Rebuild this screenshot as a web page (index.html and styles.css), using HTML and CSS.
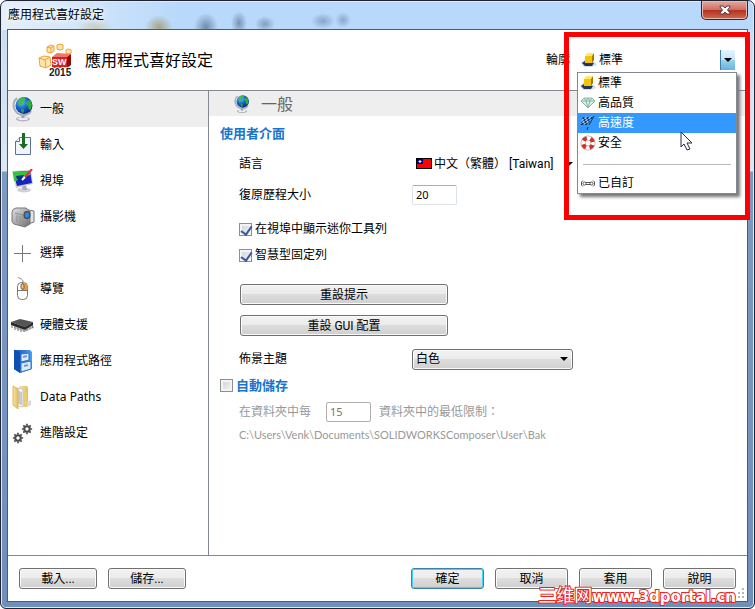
FILE: index.html
```html
<!DOCTYPE html>
<html lang="zh-Hant">
<head>
    <meta charset="UTF-8">
    <title>應用程式喜好設定</title>
    <meta name="viewport" content="width=device-width, initial-scale=1.0">
    <link rel="stylesheet" href="styles.css">
</head>
<body>
<!-- shared icons -->
<svg class="defs" width="0" height="0" aria-hidden="true">
    <defs>
        <radialGradient id="sea" cx="35%" cy="30%" r="75%">
            <stop offset="0" stop-color="#6fc4ff"/>
            <stop offset=".5" stop-color="#1563d8"/>
            <stop offset="1" stop-color="#06247e"/>
        </radialGradient>
        <linearGradient id="metal" x1="0" y1="0" x2="1" y2="1">
            <stop offset="0" stop-color="#e4e4e4"/>
            <stop offset="1" stop-color="#6e6e6e"/>
        </linearGradient>
        <linearGradient id="cabinet" x1="0" y1="0" x2="1" y2="0">
            <stop offset="0" stop-color="#0d4fb4"/>
            <stop offset="1" stop-color="#4aa0f4"/>
        </linearGradient>
        <linearGradient id="folder" x1="0" y1="0" x2="1" y2="0">
            <stop offset="0" stop-color="#f9e6a4"/>
            <stop offset="1" stop-color="#e3bd5c"/>
        </linearGradient>
    </defs>
    <symbol id="globe" viewBox="1 1 22 26">
        <ellipse cx="12" cy="24" rx="7" ry="2.500" fill="#b4b6c4"/>
        <ellipse cx="12" cy="23.500" rx="5" ry="1.500" fill="#eceef4"/>
        <path d="M12 19v4" stroke="#9a9cac" stroke-width="3"/>
        <path d="M6 3C0 8 2 19 12 20c4 0 7-1 8-4" fill="none" stroke="#a9abba" stroke-width="2"/>
        <circle cx="13" cy="10.500" r="8.500" fill="url(#sea)"/>
        <path d="M8 5c1-2 4-3 6-2l0 2-2 1 0 2-2 1-1 2-2-2z" fill="#3fbf3a"/>
        <path d="M16 6l3-1 2 4-1 5-2 1-1-4-2-2z" fill="#2fae36"/>
        <path d="M10 13l3 1 0 3-2 1-1-2z" fill="#2a9d3a"/>
    </symbol>
    <symbol id="cube" viewBox="0 0 16 16">
        <path d="M0 11l4-4 10 3 2 3-5 2H3z" fill="#d5dded"/>
        <path d="M1 11l3-2 9 2-2 3H4z" fill="#26345c"/>
        <path d="M4 4l2-3h7l-2 3z" fill="#ffe96a"/>
        <path d="M4 4h7v7H4z" fill="#f2c40c"/>
        <path d="M11 4l2-3v7l-2 3z" fill="#a87800"/>
    </symbol>
    <symbol id="gear" viewBox="-7 -7 14 14">
        <circle r="3.200" fill="none" stroke="#4a4a4a" stroke-width="2.400"/>
        <path d="M0-4v-2M0 4v2M-4 0h-2M4 0h2M-3-3l-1.300-1.300M3 3l1.300 1.300M-3 3l-1.300 1.300M3-3l1.300-1.300" stroke="#4a4a4a" stroke-width="2"/>
    </symbol>
</svg>

<div class="window">
    <div class="titlebar">
        <h1>應用程式喜好設定</h1>
        <button type="button" class="close" aria-label="關閉">
            <svg width="12" height="10" viewBox="0 0 12 10"><path d="M1 1h3l2 2 2-2h3v1L8.500 5 11 8v1H8L6 7 4 9H1V8l2.500-3L1 2z" fill="#fff" stroke="#5a3a40"/></svg>
        </button>
    </div>

    <div class="client">
        <header class="header">
            <svg class="logo" width="34" height="34" viewBox="0 0 34 34">
                <g fill="#fde6ad" stroke="#f0a437">
                    <path d="M1 15l5-2 6 1 1 8-5 3-6-2z"/>
                    <path d="M1 15l6 2 5-3M7 17l1 8" fill="none"/>
                    <path d="M9 4l4-2 3 1v5l-3 2-4-1z"/>
                    <path d="M9 4l4 1 3-2M13 5v5" fill="none"/>
                    <path d="M19 2l3-1 3 1v4l-3 1-3-1z"/>
                    <path d="M28 7l2-1 3 1v3l-3 1-2-1z"/>
                </g>
                <path d="M14 14l5-4 14 1-4 3z" fill="#f0766c"/>
                <path d="M14 14h15v11H14z" fill="#d8231c"/>
                <path d="M29 14l4-3v11l-4 3z" fill="#8c0d0a"/>
                <text class="logo-sw" x="14" y="22">SW</text>
                <text class="logo-year" x="11" y="33">2015</text>
            </svg>
            <h2>應用程式喜好設定</h2>
            <label for="profile">輪廓</label>
            <div class="profile">
                <svg width="16" height="16"><use href="#cube"/></svg>
                <select id="profile">
                    <option>標準</option>
                </select>
                <span class="drop"></span>
                <ul class="menu" role="listbox" aria-label="輪廓">
                    <li role="option">
                        <svg width="16" height="16"><use href="#cube"/></svg>標準
                    </li>
                    <li role="option">
                        <svg width="16" height="16" viewBox="0 0 16 16">
                            <path d="M4 3h8l3 3-7 7-7-7z" fill="#d6efe6" stroke="#8fb5a8"/>
                            <path d="M1 6h14M4 3l2 3 2-3 2 3 2-3M6 6l2 7 2-7" fill="none" stroke="#8fb5a8"/>
                        </svg>高品質
                    </li>
                    <li role="option" class="active" aria-selected="true">
                        <svg width="16" height="16" viewBox="0 0 16 16">
                            <path d="M3 2c3-1 5 1 9-1l-4 8c-3 1-5-1-8 1z" fill="#8cc4fa"/>
                            <path d="M3 2h2L4 4H2zM7 2h2L8 4H6zM11 2h2l-1 2h-2zM4 4h2L5 6H3zM8 4h2L9 6H7zM2 6h1L2 8H1zM5 6h2L6 8H4zM9 6h1L9 8H8zM2 8h2l-1 2H0zM6 8h2l-1 2H5z" fill="#12365e"/>
                            <path d="M14 1L9 10M8 12l-1 3" stroke="#12365e"/>
                        </svg>高速度
                    </li>
                    <li role="option">
                        <svg width="16" height="16" viewBox="0 0 16 16">
                            <circle cx="8" cy="8" r="5" fill="none" stroke="#b5b5b5" stroke-width="5"/>
                            <circle cx="8" cy="8" r="5" fill="none" stroke="#fff" stroke-width="3.500"/>
                            <circle cx="8" cy="8" r="5" fill="none" stroke="#d8302a" stroke-width="4" stroke-dasharray="4 3.850" stroke-dashoffset="-2"/>
                        </svg>安全
                    </li>
                    <li class="divider" role="separator"></li>
                    <li role="option">
                        <svg width="16" height="16" viewBox="0 0 16 16" fill="none" stroke="#555">
                            <path d="M6 7.500h5M6 9.500h5M3 5.500L1.500 7v3L3 11.500M13 5.500l1.500 1.500v3L13 11.500"/>
                            <circle cx="4.500" cy="8.500" r="1.500"/>
                            <circle cx="11.500" cy="8.500" r="1.500"/>
                        </svg>已自訂
                    </li>
                </ul>
            </div>
        </header>

        <div class="body">
            <nav class="sidebar">
                <a href="#general" class="current">
                    <svg width="24" height="26"><use href="#globe"/></svg>一般
                </a>
                <a href="#input">
                    <svg width="24" height="24" viewBox="0 0 24 24">
                        <path d="M8.500 4.500h11v17h-15v-13z" fill="#f1f4fa" stroke="#5b7297"/>
                        <path d="M4.500 8.500h4v-4" fill="#fff" stroke="#5b7297"/>
                        <path d="M11 0h3v11h3l-4.500 5L8 11h3z" fill="#1c6b24"/>
                    </svg>輸入
                </a>
                <a href="#viewport">
                    <svg width="24" height="24" viewBox="0 0 24 24">
                        <ellipse cx="13" cy="21" rx="7" ry="2.500" fill="#d0d2d8"/>
                        <path d="M11 17l4-1 1 5h-4z" fill="#a9acb5"/>
                        <path d="M1 2l19-1 2 14-17 4z" fill="#c9ccd4"/>
                        <path d="M2 3l17-1 2 12-15 3z" fill="#1824c0"/>
                        <path d="M2 3l17-1 0 4-9 3-5 3-2 0z" fill="#35c33c"/>
                        <path d="M5 7l8-1-2 3 2 2-4 1-3-2z" fill="#0c2f8c"/>
                        <path d="M21 0l-7 8" stroke="#e0332a" stroke-width="2"/>
                        <path d="M14 8l-3 3" stroke="#fff" stroke-width="2"/>
                    </svg>視埠
                </a>
                <a href="#camera">
                    <svg width="24" height="24" viewBox="0 0 24 24">
                        <path d="M17 5l6 1v11l-6 2z" fill="#dfe2ea" stroke="#777"/>
                        <path d="M1 7q0-3 4-4h10l4 3v13l-5 3-11-3q-2-1-2-3z" fill="url(#metal)" stroke="#777"/>
                        <path d="M4 8l8 2v11M6 10v7M9 11v7" fill="none" stroke="#8f8f8f"/>
                        <ellipse cx="16" cy="10" rx="3.500" ry="4" fill="#444"/>
                        <ellipse cx="16" cy="10" rx="2.300" ry="2.800" fill="#2d8be8"/>
                    </svg>攝影機
                </a>
                <a href="#selection">
                    <svg width="24" height="24" viewBox="0 0 24 24"><path d="M11.500 4v17M3 12.500h17" stroke="#777"/></svg>選擇
                </a>
                <a href="#navigation">
                    <svg width="24" height="24" viewBox="0 0 24 24">
                        <path d="M7 0c1 2 5 1 5 5" fill="none" stroke="#888"/>
                        <rect x="6.500" y="5.500" width="10" height="17" rx="4" fill="#fff" stroke="#777"/>
                        <path d="M12 6c3 0 4.500 2 4.500 4v3H12z" fill="#f79a22"/>
                        <path d="M6.500 13.500h10M11.500 5v8" stroke="#777"/>
                        <rect x="10" y="7" width="3" height="5" rx="1" fill="#fbc56f" stroke="#666"/>
                    </svg>導覽
                </a>
                <a href="#hardware">
                    <svg width="24" height="24" viewBox="0 0 24 24">
                        <path d="M3 15l11 4 9-4v-2H3z" fill="#c4c4c4"/>
                        <path d="M0 9l9-3 13 3-8 5z" fill="#555"/>
                        <path d="M0 9l14 5v3L0 12zM14 14l8-5v3l-8 5z" fill="#2a2a2a"/>
                        <path d="M1 12v3M4 13v4M7 14v4M10 15v4M13 16v3M16 15v3M19 13v3M21.500 12v3" stroke="#777"/>
                    </svg>硬體支援
                </a>
                <a href="#apppaths">
                    <svg width="24" height="24" viewBox="0 0 24 24">
                        <path d="M3 1h16l2 2v17l-12 4-6-4z" fill="url(#cabinet)"/>
                        <path d="M3 1l6 2v21l-6-4z" fill="#1250b0"/>
                        <path d="M10 5l8-1v7l-8 2zM10 14l10-2v8l-10 3z" fill="#dceafa" stroke="#2a72d0"/>
                        <path d="M12 8l4-1M13 17l4-1" stroke="#8797b0" stroke-width="2"/>
                    </svg>應用程式路徑
                </a>
                <a href="#datapaths">
                    <svg width="24" height="24" viewBox="0 0 24 24">
                        <path d="M8 1h8l1 2v17l-9 2z" fill="url(#folder)"/>
                        <path d="M5 3l7 1v18l-6-1z" fill="#f4f4f4" stroke="#c9c9c9"/>
                        <path d="M8 6v13M10 7v13" stroke="#9aa2ad"/>
                        <path d="M2 1l5 3v20l-5-4z" fill="url(#folder)" stroke="#dcb75c"/>
                        <path d="M13 8h3v14h-4z" fill="#edcb70"/>
                        <path d="M16 17l4-2v5l-4 2z" fill="#d7dade"/>
                    </svg>Data Paths
                </a>
                <a href="#advanced">
                    <svg width="24" height="24" viewBox="0 0 24 24">
                        <use href="#gear" x="1" y="11" width="12" height="12"/>
                        <use href="#gear" x="10" y="2" width="12" height="12"/>
                    </svg>進階設定
                </a>
            </nav>

            <main class="content" id="general">
                <h2 class="page-title">
                    <svg width="16" height="20"><use href="#globe"/></svg>一般
                </h2>
                <section class="group">
                    <h3>使用者介面</h3>
                    <div class="row">
                        <label for="language">語言</label>
                        <div class="language">
                            <svg width="16" height="11" viewBox="0 0 16 11">
                                <path d="M0 0h16v11H0z" fill="#000"/>
                                <path d="M1 1h14v9H1z" fill="#f00"/>
                                <path d="M1 1h6v5H1z" fill="#000090"/>
                                <path d="M4 2v3M2.500 3.500h3" stroke="#fff"/>
                            </svg>
                            <select id="language">
                                <option>中文（繁體） [Taiwan]</option>
                            </select>
                        </div>
                    </div>
                    <div class="row">
                        <label for="history">復原歷程大小</label>
                        <input type="text" id="history" value="20">
                    </div>
                    <div class="checks">
                        <label><input type="checkbox" checked>在視埠中顯示迷你工具列</label>
                        <label><input type="checkbox" checked>智慧型固定列</label>
                    </div>
                    <div class="resets">
                        <button type="button">重設提示</button>
                        <button type="button">重設 GUI 配置</button>
                    </div>
                    <div class="row theme">
                        <label for="theme">佈景主題</label>
                        <div class="combo">
                            <select id="theme">
                                <option>白色</option>
                            </select>
                        </div>
                    </div>
                </section>
                <section class="group autosave">
                    <h3><label><input type="checkbox">自動儲存</label></h3>
                    <div class="row interval">
                        <label for="minutes">在資料夾中每</label>
                        <input type="text" id="minutes" value="15" disabled>
                        <span>資料夾中的最低限制：</span>
                    </div>
                    <p class="path">C:\Users\Venk\Documents\SOLIDWORKSComposer\User\Bak</p>
                </section>
            </main>
        </div>

        <footer class="footer">
            <button type="button" class="wide">載入...</button>
            <button type="button" class="wide">儲存...</button>
            <button type="button" class="default">確定</button>
            <button type="button">取消</button>
            <button type="button">套用</button>
            <button type="button">說明</button>
        </footer>
    </div>

    <svg class="grip" width="12" height="12" viewBox="0 0 12 12" fill="#b8b8b8"><path d="M8 0h2v2H8zM4 4h2v2H4zM8 4h2v2H8zM0 8h2v2H0zM4 8h2v2H4zM8 8h2v2H8z"/></svg>
    <div class="highlight"></div>
    <svg class="cursor" width="13" height="20" viewBox="0 0 13 20"><path d="M1 1v15l3-3 3 6 3-1-3-6h5z" fill="#fff" stroke="#222b4a"/></svg>
    <p class="watermark"><span>三维网</span>www.3dportal.cn</p>
</div>
</body>
</html>
```
FILE: styles.css
```css
*{margin: 0;padding: 0;box-sizing: border-box;}
body{
    background-color: #fff;
    font-family: "Noto Sans", "Noto Sans CJK TC", sans-serif;
    font-size: 12px;
    line-height: 20px;
    color: #000;
}
svg{flex: none;}
button,input,select{
    font: inherit;
    color: inherit;
}
.defs{position: absolute;}

/* window frame */
.window{
    position: relative;
    display: flex;
    flex-direction: column;
    min-height: 100vh;
    padding: 0 6px 6px;
    border: 1px solid #1f2433;
    border-radius: 7px 7px 6px 6px;
    background:
        radial-gradient(ellipse 18px 12px at 94px 27px, #c9cfc0, transparent),
        radial-gradient(ellipse 14px 12px at 158px 26px, #a8a58a, transparent),
        radial-gradient(ellipse 12px 14px at 205px 26px, #6f8cad, transparent),
        radial-gradient(ellipse 8px 12px at 238px 22px, #7893b3, transparent),
        radial-gradient(ellipse 10px 8px at 264px 23px, #7f9fc0, transparent),
        radial-gradient(ellipse 12px 8px at 322px 20px, #85a6c8, transparent),
        radial-gradient(ellipse 8px 8px at 342px 19px, #88a9cc, transparent),
        linear-gradient(90deg, #e6eff9, #b8d9fb 180px, #b8d9fb) 0 0 / 100% 29px no-repeat,
        linear-gradient(#c6dcf3, #dbe7f3 170px, #7c9ac2 171px, #6f8fbb);
    box-shadow: inset 0 0 0 1px #dcebfb;
}
.titlebar{
    display: flex;
    justify-content: space-between;
    height: 28px;
    padding-left: 1px;
}
.titlebar h1{
    font-size: 12px;
    font-weight: normal;
    line-height: 28px;
    text-shadow: 0 0 6px #fff, 0 0 6px #fff;
}
.close{
    display: flex;
    align-items: center;
    justify-content: center;
    width: 47px;
    height: 19px;
    border: 1px solid #4f1a1d;
    border-top: 0;
    border-radius: 0 0 5px 5px;
    background: linear-gradient(#e3aaa0, #cf6f62 48%, #b42f20 50%, #cc6a50);
    box-shadow: inset 0 0 0 1px #e9b9b0;
}
.client{
    display: flex;
    flex-direction: column;
    flex: 1;
    border: 1px solid #4f5a6c;
    background-color: #fff;
}

/* header */
.header{
    display: flex;
    align-items: center;
    height: 61px;
    padding: 0 12px 0 30px;
    border-bottom: 1px solid #848794;
}
.logo{margin-right: 13px;}
.logo-sw{
    font: bold 9px "Liberation Sans", sans-serif;
    fill: #fff;
}
.logo-year{
    font: bold 10px "Liberation Sans", sans-serif;
    fill: #222;
    stroke: #fff;
    stroke-width: 2px;
    paint-order: stroke;
}
.header h2{
    margin-right: auto;
    font-size: 16px;
    font-weight: normal;
}
.profile{
    position: relative;
    display: flex;
    align-items: center;
    width: 154px;
    height: 20px;
    margin-left: 11px;
}
.profile select{
    flex: 1;
    height: 20px;
    margin-left: 2px;
    border: 0;
    background: none;
    appearance: none;
}
.drop{
    display: flex;
    align-items: center;
    justify-content: center;
    width: 15px;
    height: 20px;
    border-left: 1px solid #3c7fb1;
    background: linear-gradient(#e3f4fc, #c4e5f6 50%, #98d1ef 50%, #6db2da);
}
.drop::after,
.language::after,
.combo::after{
    content: "";
    border: 4px solid transparent;
    border-top-color: #000;
    border-bottom: 0;
}
.menu{
    position: absolute;
    z-index: 2;
    top: 22px;
    left: -4px;
    right: -2px;
    border: 1px solid #848794;
    background-color: #fff;
    box-shadow: 3px 3px 3px #777;
    list-style: none;
}
.menu li{
    display: flex;
    align-items: center;
    gap: 2px;
    height: 20px;
    padding-left: 2px;
}
.menu li.active{
    color: #fff;
    background-color: #3399ff;
}
.menu li.divider::before{
    content: "";
    flex: 1;
    height: 1px;
    margin: 2px 5px 0 3px;
    background-color: #bbb;
}

/* sidebar */
.body{
    display: flex;
    flex: 1;
}
.sidebar{
    width: 201px;
    border-right: 1px solid #848794;
}
.sidebar a{
    display: flex;
    align-items: center;
    gap: 5px;
    height: 36px;
    padding-left: 3px;
    color: #000;
    text-decoration: none;
}
.sidebar a.current{background-color: #eeeeee;}

/* settings page */
.content{flex: 1;}
.page-title{
    display: flex;
    align-items: center;
    gap: 11px;
    height: 25px;
    padding-left: 25px;
    font-size: 16px;
    font-weight: normal;
    color: #666;
    background-color: #eeeeee;
}
.group{padding: 6px 11px 0;}
.group h3{
    height: 22px;
    margin-bottom: 4px;
    font-size: 13px;
    line-height: 22px;
    color: #1874cd;
}
.row{
    display: flex;
    align-items: center;
    height: 31px;
    padding-left: 19px;
}
.row > label{width: 173px;}
.group input[type=text]{
    width: 45px;
    height: 20px;
    padding-left: 3px;
    border: 1px solid #dde1e8;
    border-top-color: #abadb3;
    border-radius: 2px;
    background-color: #fff;
    font-size: 11px;
}
.language{
    display: flex;
    align-items: center;
    width: 161px;
    padding-left: 4px;
}
.language select{
    flex: 1;
    padding-left: 2px;
    border: 0;
    background: none;
    appearance: none;
}
.language select,
.resets button,
.footer button{
    font-family: Roboto, "Noto Sans CJK TC", sans-serif;
}
.checks{
    display: flex;
    flex-direction: column;
    align-items: flex-start;
    padding: 6px 0 0 19px;
}
.checks label,
.autosave h3 label{
    display: flex;
    align-items: center;
    gap: 3px;
    height: 26px;
}
.autosave h3 label{
    height: 22px;
}
input[type=checkbox]{
    position: relative;
    width: 13px;
    height: 13px;
    border: 1px solid #8e8f8f;
    background: linear-gradient(135deg, #cbcfd5, #f6f6f6);
    box-shadow: inset 0 0 0 2px #f4f4f4;
    appearance: none;
}
input[type=checkbox]:checked::after{
    content: "";
    position: absolute;
    top: 0;
    left: 3px;
    width: 5px;
    height: 9px;
    border: solid #3b5aa0;
    border-width: 0 2px 2px 0;
    transform: rotate(35deg);
}
.resets{
    display: flex;
    flex-direction: column;
    gap: 10px;
    padding: 16px 0 0 20px;
}
.resets button,
.footer button,
.combo{
    height: 21px;
    border: 1px solid #707070;
    border-radius: 3px;
    background: linear-gradient(#f2f2f2, #ebebeb 50%, #dddddd 50%, #cfcfcf);
    box-shadow: inset 0 0 0 1px #fafafa;
    line-height: 18px;
}
.resets button,
.footer button{padding-top: 1px;}
.resets button{width: 208px;}
.row.theme{
    height: 22px;
    margin-top: 12px;
}
.combo{
    display: flex;
    align-items: center;
    width: 161px;
    padding-right: 4px;
}
.combo select{
    flex: 1;
    height: 19px;
    padding-left: 3px;
    border: 0;
    background: none;
    appearance: none;
}
.autosave{padding-top: 4px;}
.row.interval{
    height: 24px;
    color: #999;
}
.interval > label{width: 87px;}
.interval input[type=text]{
    margin-right: 8px;
    border-color: #afafaf;
    color: #777;
}
.path{
    padding-left: 19px;
    font-family: Lato, sans-serif;
    font-size: 11px;
    line-height: 22px;
    color: #999;
}

/* footer */
.footer{
    display: flex;
    align-items: center;
    gap: 11px;
    height: 46px;
    padding: 0 11px;
    border-top: 1px solid #848794;
}
.footer button{width: 73px;}
.footer button.wide{width: 78px;}
.footer button.default{
    margin-left: auto;
    border-color: #3c7fb1;
    box-shadow: inset 0 0 0 1px #48d1f5;
}

/* things lying over the window */
.grip{
    position: absolute;
    right: 8px;
    bottom: 8px;
}
.highlight{
    position: absolute;
    z-index: 1;
    top: 31px;
    right: 4px;
    width: 186px;
    height: 188px;
    border: 5px solid #ff0000;
}
.cursor{
    position: absolute;
    z-index: 3;
    top: 130px;
    right: 61px;
}
.watermark{
    position: absolute;
    right: 18px;
    bottom: 1px;
    font-family: "DejaVu Sans", "Noto Sans CJK SC", sans-serif;
    font-size: 15px;
    font-weight: bold;
    line-height: 20px;
    white-space: nowrap;
    color: #fff;
    -webkit-text-stroke: 2px #ee2222;
    paint-order: stroke fill;
}
.watermark span{
    font-size: 18px;
    font-weight: normal;
}
```
